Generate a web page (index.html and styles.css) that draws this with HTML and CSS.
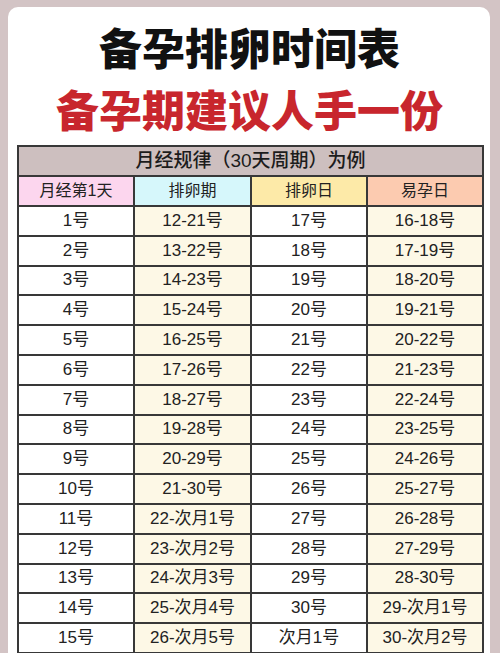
FILE: index.html
```html
<!DOCTYPE html>
<html lang="zh-CN">
<head>
<meta charset="utf-8">
<title>备孕排卵时间表</title>
<link rel="stylesheet" href="styles.css">
</head>
<body>
<div class="card">
  <h1 class="title">备孕排卵时间表</h1>
  <h2 class="subtitle">备孕期建议人手一份</h2>
  <table class="chart">
    <colgroup>
      <col class="c1"><col class="c2"><col class="c3"><col class="c4">
    </colgroup>
    <thead>
      <tr class="caption-row"><th colspan="4" class="caption-cell">月经规律（30天周期）为例</th></tr>
      <tr class="head-row">
        <th class="h-pink">月经第1天</th>
        <th class="h-cyan">排卵期</th>
        <th class="h-yellow">排卵日</th>
        <th class="h-peach">易孕日</th>
      </tr>
    </thead>
    <tbody>
      <tr><td>1号</td><td class="cream">12-21号</td><td>17号</td><td class="cream">16-18号</td></tr>
      <tr><td>2号</td><td class="cream">13-22号</td><td>18号</td><td class="cream">17-19号</td></tr>
      <tr><td>3号</td><td class="cream">14-23号</td><td>19号</td><td class="cream">18-20号</td></tr>
      <tr><td>4号</td><td class="cream">15-24号</td><td>20号</td><td class="cream">19-21号</td></tr>
      <tr><td>5号</td><td class="cream">16-25号</td><td>21号</td><td class="cream">20-22号</td></tr>
      <tr><td>6号</td><td class="cream">17-26号</td><td>22号</td><td class="cream">21-23号</td></tr>
      <tr><td>7号</td><td class="cream">18-27号</td><td>23号</td><td class="cream">22-24号</td></tr>
      <tr><td>8号</td><td class="cream">19-28号</td><td>24号</td><td class="cream">23-25号</td></tr>
      <tr><td>9号</td><td class="cream">20-29号</td><td>25号</td><td class="cream">24-26号</td></tr>
      <tr><td>10号</td><td class="cream">21-30号</td><td>26号</td><td class="cream">25-27号</td></tr>
      <tr><td>11号</td><td class="cream">22-次月1号</td><td>27号</td><td class="cream">26-28号</td></tr>
      <tr><td>12号</td><td class="cream">23-次月2号</td><td>28号</td><td class="cream">27-29号</td></tr>
      <tr><td>13号</td><td class="cream">24-次月3号</td><td>29号</td><td class="cream">28-30号</td></tr>
      <tr><td>14号</td><td class="cream">25-次月4号</td><td>30号</td><td class="cream">29-次月1号</td></tr>
      <tr><td>15号</td><td class="cream">26-次月5号</td><td>次月1号</td><td class="cream">30-次月2号</td></tr>
    </tbody>
  </table>
</div>
</body>
</html>
```
FILE: styles.css
```css
html, body {
  margin: 0;
  padding: 0;
  height: 653px;
  overflow: hidden;
}
body {
  background: #d3c4c5;
  font-family: "Noto Sans CJK SC", "Noto Sans", sans-serif;
  color: #222;
}
.card {
  margin: 7px 10px 0 8px;
  background: #fff;
  border-radius: 10px 10px 0 0;
  padding: 8px 8px 20px 9px;
  display: flex;
  flex-direction: column;
  align-items: stretch;
}
.title, .subtitle {
  margin: 0;
  text-align: center;
  font-size: 43px;
  font-weight: 900;
  line-height: 62px;
  letter-spacing: 0;
}
.title {
  color: #111;
}
.subtitle {
  color: #c8262d;
}
.chart {
  margin-top: 6px;
  width: 465px;
  table-layout: fixed;
  border-collapse: collapse;
  border: 2px solid #383838;
  font-family: "Liberation Sans", "Noto Sans CJK SC", sans-serif;
}
.c1 { width: 116px; }
.c2 { width: 117px; }
.c3 { width: 116px; }
.c4 { width: 116px; }
.chart th, .chart td {
  border: 2px solid #383838;
  text-align: center;
  padding: 0;
  font-size: 17px;
  font-weight: 400;
  color: #222;
  height: 27.8px;
  line-height: 20px;
}
.chart .head-row th {
  height: 28px;
  font-size: 16px;
}
.chart .caption-row th {
  height: 28px;
  background: #cdbfbf;
  font-size: 19px;
  font-weight: 500;
  color: #1c1c1c;
}
.h-pink { background: #fcd6ee; }
.h-cyan { background: #d6f7fb; }
.h-yellow { background: #fdeaa8; }
.h-peach { background: #fccbb0; }
.cream { background: #fdf8e6; }
```
